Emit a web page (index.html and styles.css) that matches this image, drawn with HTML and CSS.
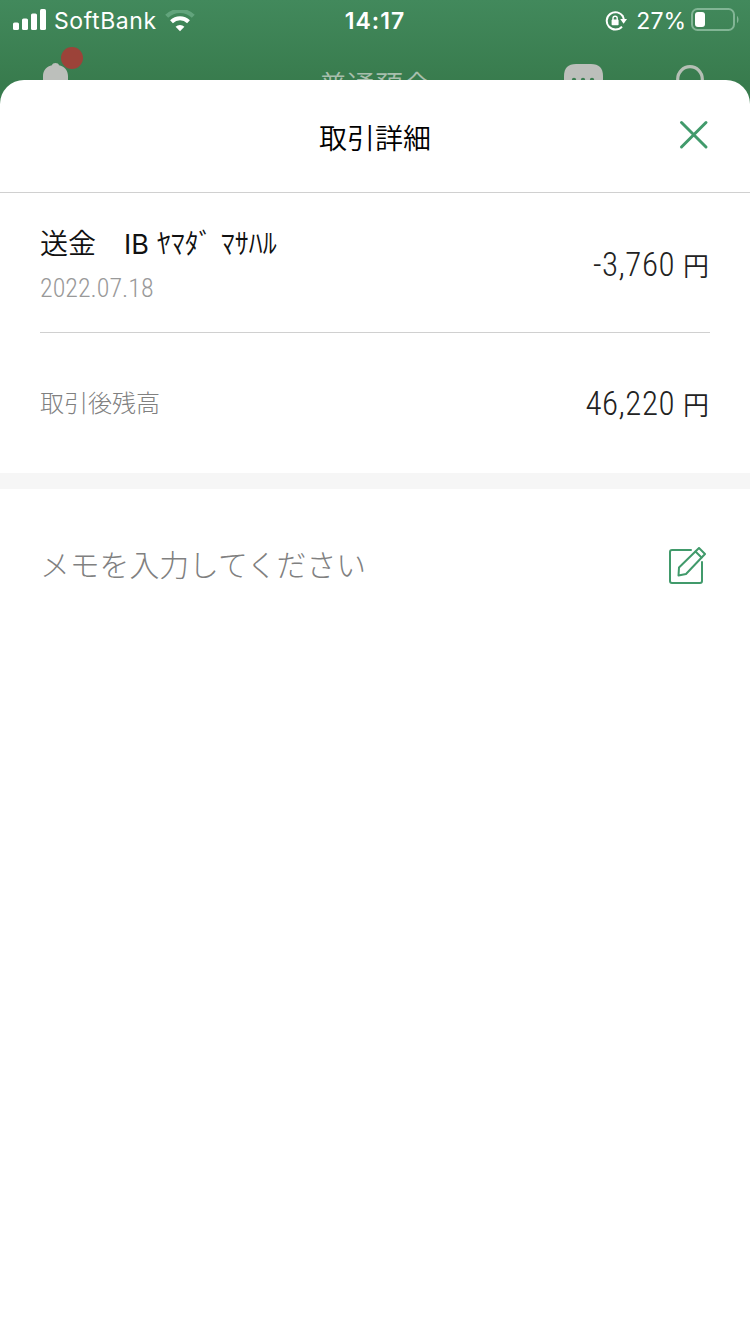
FILE: index.html
```
<!DOCTYPE html>
<html lang="ja">
    <head>
        <meta charset="utf-8">
        <title>取引詳細</title>
        <link rel="stylesheet" href="styles.css">
    </head>
    <body>
        <div class="top">
            <div class="status">
                <div class="status-left">
                    <svg class="signal" width="34" height="22" viewBox="0 0 34 22" fill="#fff">
                        <rect x="0" y="13.5" width="6" height="7.5" rx="1.6"/>
                        <rect x="9" y="9.5" width="6" height="11.5" rx="1.6"/>
                        <rect x="18" y="4.5" width="6" height="16.5" rx="1.6"/>
                        <rect x="27" y="0" width="6" height="21" rx="1.6"/>
                    </svg>
                    <span class="carrier">SoftBank</span>
                    <svg class="wifi" width="30" height="22" viewBox="0 0 30 22" fill="none">
                        <path d="M1.7 6.3 A19 19 0 0 1 28.3 6.3" stroke="#62a47c" stroke-width="4.2"/>
                        <path d="M6.5 11.8 A12.2 12.2 0 0 1 23.5 11.8" stroke="#fff" stroke-width="4"/>
                        <path d="M15 21.2 L10.6 16.8 A6.3 6.3 0 0 1 19.4 16.8 Z" fill="#fff"/>
                    </svg>
                </div>
                <span class="clock">14:17</span>
                <div class="status-right">
                    <svg class="lock" width="23" height="20" viewBox="0 0 23 20" fill="none">
                        <path d="M18 5.6 A8.7 8.7 0 1 0 17 15.6" stroke="#fff" stroke-width="2"/>
                        <path d="M17.6 5 Q18.6 6.6 18.8 8.5" stroke="#fff" stroke-width="2"/>
                        <path d="M15.2 8 H22 L18.6 12.8 Z" fill="#fff"/>
                        <rect x="6.6" y="8.6" width="7" height="5.6" rx="0.8" fill="#fff"/>
                        <path d="M8 9 V7.3 A2.1 2.1 0 0 1 12.2 7.3 V9" stroke="#fff" stroke-width="1.4"/>
                    </svg>
                    <span class="percent">27%</span>
                    <svg class="battery" width="48" height="23" viewBox="0 0 48 23" fill="none">
                        <rect x="1" y="1" width="42" height="21" rx="5.5" stroke="#82b595" stroke-width="2"/>
                        <rect x="4" y="4" width="10" height="15" rx="3" fill="#fff"/>
                        <path d="M46 8 C48 9 48 14 46 15 Z" fill="#82b595"/>
                    </svg>
                </div>
            </div>
            <div class="nav">
                <svg class="bell" width="42" height="34" viewBox="0 0 42 34">
                    <path d="M0 34 V29 C0 23 4 19 9 18.2 C9.4 15.3 15.6 15.3 16 18.2 C21 19 25 23 25 29 V34 Z" fill="#bcbfbb"/>
                    <circle cx="29" cy="11" r="11" fill="#9c4339"/>
                </svg>
                <span class="nav-title">普通預金</span>
                <svg class="chat" width="39" height="16" viewBox="0 0 39 16">
                    <path d="M0 16 V12 C0 4 4 0 12 0 H27 C35 0 39 4 39 12 V16 Z" fill="#bcbfbb"/>
                    <g fill="#3c7f52">
                        <circle cx="10" cy="16" r="2.2"/>
                        <circle cx="19" cy="16" r="2.2"/>
                        <circle cx="28" cy="16" r="2.2"/>
                    </g>
                </svg>
                <svg class="search" width="28" height="15" viewBox="0 0 28 15" fill="none">
                    <circle cx="14" cy="14" r="12.3" stroke="#b5bfb5" stroke-width="3.2"/>
                </svg>
            </div>
        </div>
        <div class="sheet">
            <div class="sheet-header">
                <span class="sheet-title">取引詳細</span>
                <svg class="close" width="30" height="30" viewBox="0 0 30 30">
                    <path d="M2.5 2.5 L27 27 M27 2.5 L2.5 27" stroke="#419a6b" stroke-width="3" stroke-linecap="round"/>
                </svg>
            </div>
            <div class="detail">
                <div class="detail-text">
                    <div class="name">送金　<span class="latin">IB</span> ﾔﾏﾀﾞ ﾏｻﾊﾙ</div>
                    <div class="date">2022.07.18</div>
                </div>
                <div class="price"><span class="num">-3,760</span><span class="yen">円</span></div>
            </div>
            <div class="balance">
                <span class="label">取引後残高</span>
                <div class="price"><span class="num">46,220</span><span class="yen">円</span></div>
            </div>
            <div class="separator"></div>
            <div class="memo">
                <span class="placeholder">メモを入力してください</span>
                <svg class="edit" width="38" height="38" viewBox="0 0 38 38" fill="none" stroke="#419a6b" stroke-width="2" stroke-linejoin="round" stroke-linecap="round">
                    <path d="M23 3 H4 Q2 3 2 5 V34 Q2 36 4 36 H32 Q34 36 34 34 V15"/>
                    <path d="M31 1 L37 7 L18 27 L10.5 28.5 L11 20.5 Z"/>
                    <path d="M27.5 4.5 L33.5 10.5"/>
                </svg>
            </div>
        </div>
    </body>
</html>
```

FILE: styles.css
```
body{
    margin: 0;
    height: 1334px;
    display: flex;
    flex-direction: column;
    overflow: hidden;
    background: linear-gradient(#42895c 0, #387b4d 84px);
    font-family: Inter, "Noto Sans CJK JP", sans-serif;
}
svg{
    display: block;
    flex: none;
}
.top{
    height: 80px;
    overflow: hidden;
}
.status{
    height: 41px;
    display: grid;
    grid-template-columns: 1fr auto 1fr;
    align-items: center;
    color: white;
    font-size: 23px;
    line-height: 41px;
}
.status-left{
    display: flex;
    align-items: center;
    padding-left: 13px;
}
.signal{
    margin-bottom: 3px;
}
.carrier{
    margin-left: 7px;
    padding-top: 1px;
    letter-spacing: 0.6px;
}
.wifi{
    margin-left: 8px;
    margin-bottom: 1px;
}
.clock{
    padding-top: 1px;
    font-weight: 600;
    letter-spacing: 1px;
}
.status-right{
    display: flex;
    align-items: center;
    justify-content: flex-end;
    padding-right: 11px;
}
.percent{
    margin: 0 5px 0 8px;
    padding-top: 1px;
}
.battery{
    margin-bottom: 3px;
}
.nav{
    height: 39px;
    display: grid;
    grid-template-columns: 276px 1fr 39px 28px;
    align-items: start;
    padding: 0 46px 0 43px;
}
.bell{
    margin-top: 6px;
}
.nav-title{
    margin-top: 28px;
    color: #a8bfad;
    font-size: 28px;
    line-height: 34px;
    font-weight: 350;
}
.chat{
    margin-top: 23px;
    margin-left: -73px;
}
.search{
    margin-top: 24px;
}
.sheet{
    flex: 1;
    background: white;
    border-radius: 24px 24px 0 0;
}
.sheet-header{
    height: 112px;
    display: grid;
    grid-template-columns: 1fr auto 1fr;
    align-items: center;
    border-bottom: 1px solid #d0d0d0;
}
.sheet-title{
    grid-column: 2;
    padding-top: 2px;
    font-size: 28px;
    font-weight: 350;
    color: #000;
}
.close{
    justify-self: end;
    margin-right: 41px;
    margin-bottom: 3px;
}
.detail{
    height: 139px;
    margin: 0 40px;
    display: flex;
    justify-content: space-between;
    align-items: center;
    border-bottom: 1px solid #d0d0d0;
}
.detail-text{
    padding-top: 7px;
}
.name{
    font-size: 28px;
    line-height: 42px;
    font-weight: 350;
    color: #111;
    white-space: pre;
}
.latin{
    font-size: 27px;
    font-weight: 400;
}
.date{
    font-family: "Roboto Condensed", Roboto, sans-serif;
    font-stretch: 75%;
    font-weight: 300;
    font-size: 26px;
    line-height: 44px;
    color: #999;
}
.price{
    display: flex;
    align-items: baseline;
    padding-top: 3px;
    padding-right: 1px;
    color: #222;
}
.num{
    font-family: "Roboto Condensed", Roboto, sans-serif;
    font-stretch: 75%;
    font-weight: 300;
    font-size: 33px;
    letter-spacing: 0.5px;
}
.yen{
    margin-left: 8px;
    font-size: 26px;
    font-weight: 350;
}
.balance{
    height: 140px;
    margin: 0 40px;
    display: flex;
    justify-content: space-between;
    align-items: center;
}
.balance .price{
    padding-top: 0;
}
.label{
    padding-bottom: 4px;
    font-size: 24px;
    font-weight: 300;
    color: #808080;
}
.separator{
    height: 16px;
    background: #f6f6f6;
}
.memo{
    height: 154px;
    margin: 0 44px 0 40px;
    display: flex;
    justify-content: space-between;
    align-items: center;
}
.placeholder{
    padding-bottom: 6px;
    font-size: 29.8px;
    font-weight: 300;
    color: #808080;
}
```
